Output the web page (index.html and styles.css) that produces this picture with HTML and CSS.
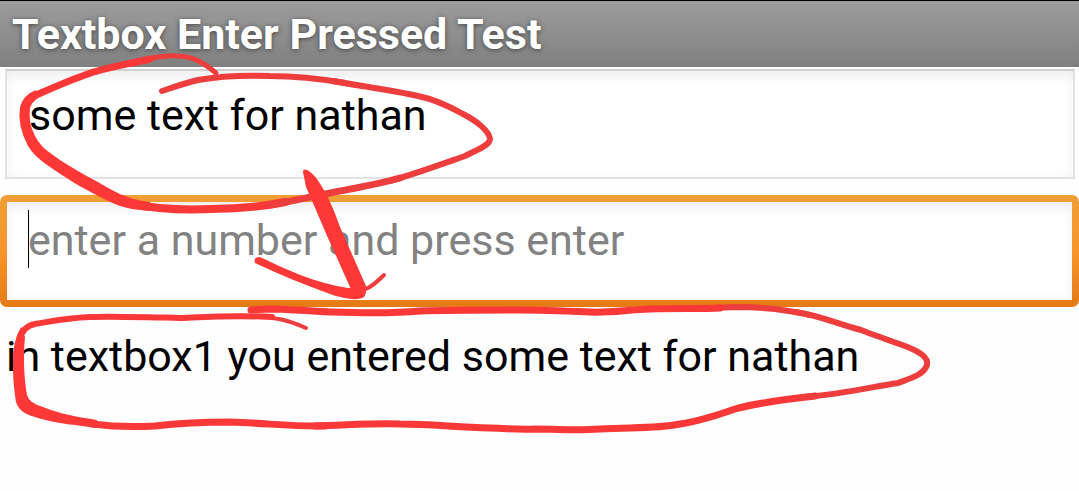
FILE: index.html
```
<!DOCTYPE html>
<html lang="en">

<head>
    <meta charset="UTF-8">
    <meta name="viewport" content="width=device-width, initial-scale=1.0">
    <title>Textbox Enter Pressed Test</title>
    <link rel="stylesheet" href="styles.css">
</head>

<body>
    <h1 class="title-bar">Textbox Enter Pressed Test</h1>
    <main class="screen">
        <div class="field">
            <input class="textbox" type="text" id="textbox1" aria-label="Text" value="some text for nathan">
        </div>
        <div class="field field-focused">
            <input class="textbox" type="text" id="textbox2" inputmode="numeric" aria-label="Number" placeholder="enter a number and press enter">
            <span class="caret"></span>
        </div>
        <p class="result">in textbox1 you entered some text for nathan</p>
    </main>

    <!-- red pen marks -->
    <svg class="marks" width="1079" height="491" viewBox="0 0 1079 491" aria-hidden="true">
        <!-- loop round the first textbox -->
        <path class="thin" stroke-width="5" d="M216 73C203 62 192 56 177 56C168 55 150 58 130 63" />
        <path stroke-width="7" d="M150 59C130 64 105 67 85 75C68 81 50 89 36 95Q29 98 26 105" />
        <path class="fill" d="M36 90Q23 95 20 107Q17 125 28 146C36 160 55 170 76 184C100 197 115 206 132 209L150 211L150 202C134 200 125 197 110 189C95 180 78 172 60 160C46 150 41 147 35 136Q28 123 30 108Q32 102 38 98Z" />
        <path stroke-width="8" d="M132 204C155 209 185 210 212 209C240 209 265 206 285 202" />
        <path class="thin" stroke-width="7" d="M270 205C292 201 310 197 325 194C350 189 375 185 400 178" />
        <path class="thin" stroke-width="6" d="M390 181C415 174 445 163 465 156C479 149 490 145 490 139C489 131 477 121 463 114C447 105 433 99 418 96C390 90 360 86 333 81" />
        <path class="thin" stroke-width="6" d="M345 83C322 79 290 76 270 76C240 75 220 76 198 80C185 83 174 87 162 91" />

        <!-- arrow -->
        <path class="fill" d="M303 172C303 167 310 170 317 179C328 195 334 210 340 227L366 286Q368 299 354 296L333 249C322 225 315 207 306 187Z" />
        <path class="fill" d="M255 263Q253 257 260 257C285 269 315 283 348 288L360 288Q369 291 364 297C358 301 345 299 330 294C305 285 281 275 255 263Z" />
        <path class="thin" stroke-width="4" d="M384 275C378 281 373 286 366 289" />

        <!-- loop round the result -->
        <path class="thin" stroke-width="4" d="M306 328C288 320 275 317 257 317" />
        <path stroke-width="6" d="M272 317C235 315 205 317 180 318C140 317 110 316 90 317C65 318 48 322 35 324Q23 326 19 340" />
        <path class="fill" d="M21 327Q12 342 13 365C13 383 15 395 16 402C19 412 28 415 38 418C58 424 78 425 96 428L97 420C78 417 60 414 43 407Q29 403 27 395C24 377 23 357 25 337Z" />
        <path stroke-width="7" d="M92 424C115 427 137 427 155 426C180 423 205 422 230 422C265 423 295 427 325 426" />
        <path stroke-width="7" d="M315 426C350 425 375 423 400 424C430 424 455 427 490 428C515 429 522 430 535 429C560 429 575 431 600 429C630 427 655 429 680 424C700 421 718 415 735 409C760 402 790 399 815 396" />
        <path class="thin" stroke-width="6" d="M805 397C845 394 870 387 898 383C914 377 924 374 927 365C929 357 918 351 905 346C888 340 874 335 861 330C840 325 819 315 795 312" />
        <path class="thin" stroke-width="6" d="M810 315C785 309 760 307 735 307L715 308" />
        <path stroke-width="7" d="M720 308C700 309 680 308 650 309C625 310 610 313 590 312C565 311 540 310 520 310C490 310 450 310 420 311C390 314 360 313 330 312C305 311 285 309 270 309L251 310" />
    </svg>
</body>

</html>
```

FILE: styles.css
```
body {
    margin: 0;
    min-height: 100vh;
    position: relative;
    background-color: #fefefe;
    color: black;
    font-family: Roboto, sans-serif;
    font-size: 43px;
}

.title-bar {
    margin: 0;
    padding: 5px 12px 4px;
    border-top: 1px solid black;
    background: linear-gradient(#9c9c9c, #808080);
    color: white;
    font-size: 43px;
    font-weight: bold;
    line-height: 57px;
    text-shadow: 0 1px 5px #444;
}

.screen {
    display: flex;
    flex-direction: column;
}

.field {
    position: relative;
    margin: 2px 4px 0 5px;
    padding: 16px 22px 34px;
    border: 2px solid #e2e2e2;
    border-top-color: #d0d0d0;
    background-color: white;
    box-shadow: inset 0 10px 14px -6px #ececec, inset 0 0 12px #f6f6f6;
}

.field-focused {
    margin: 16px 0 0;
    padding: 10px 21px 32px;
    border: 7px solid transparent;
    border-radius: 7px;
    background: linear-gradient(white, white) padding-box, linear-gradient(#f09e37, #f8952a 50%, #e47a16) border-box;
}

.textbox {
    display: block;
    box-sizing: border-box;
    width: 100%;
    height: 56px;
    padding: 0;
    border: 0;
    outline: 0;
    background: transparent;
    color: black;
    font: inherit;
}

.textbox::placeholder {
    color: #828282;
    opacity: 1;
}

.caret {
    position: absolute;
    top: 8px;
    left: 21px;
    width: 1px;
    height: 58px;
    background-color: black;
}

.result {
    margin: 20px 6px;
    line-height: 58px;
}

.marks {
    position: absolute;
    top: 0;
    left: 0;
    pointer-events: none;
}

.marks path {
    fill: none;
    stroke: #fa3838;
    stroke-linecap: round;
    stroke-linejoin: round;
}

.marks .thin {
    stroke: #ee3d3d;
}

.marks .fill {
    fill: #fd3836;
    stroke: none;
}
```
